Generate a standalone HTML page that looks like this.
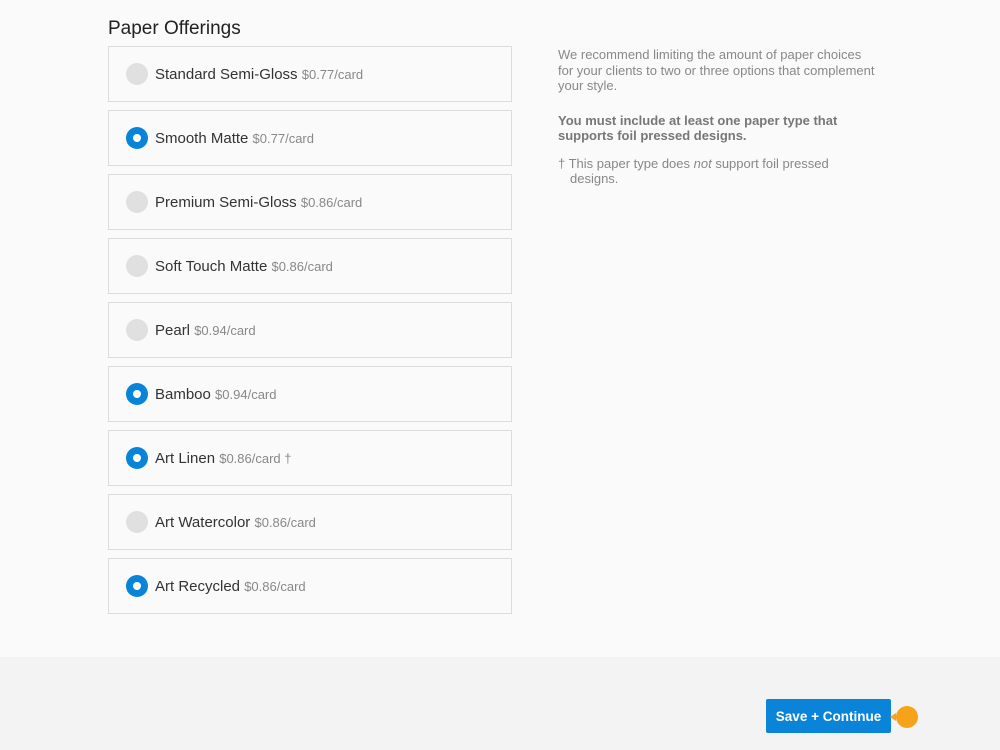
<!DOCTYPE html><html><head><style>
body{margin:0;width:1000px;height:750px;background:#fafafa;font-family:"Liberation Sans",sans-serif;position:relative;overflow:hidden}
h1{position:absolute;left:108px;top:18px;margin:0;font-size:19px;font-weight:normal;color:#222}
.c{position:absolute;left:108px;width:402px;height:54px;border:1px solid #dcdcdc;background:#fafafa;box-sizing:content-box}
.r{position:absolute;left:17px;top:16px;width:22px;height:22px;border-radius:50%;background:#e0e0e0}
.r.on{background:#0a84d8}
.r.on:after{content:"";position:absolute;left:7px;top:7px;width:8px;height:8px;border-radius:50%;background:#fff}
.t{position:absolute;left:46px;top:19px;font-size:15px;color:#333}
.t span{font-size:13px;color:#888}
.side{position:absolute;left:558px;top:47px;width:334px;font-size:13px;color:#888;line-height:15.5px}
.foot{position:absolute;left:0;top:657px;width:1000px;height:93px;background:#f3f3f3}
.btn{position:absolute;left:766px;top:699px;width:125px;height:34px;background:#0a84d8;color:#fff;font-weight:bold;font-size:13.5px;line-height:35px;text-align:center;border-radius:2px}
.dot{position:absolute;left:896px;top:706px;width:22px;height:22px;border-radius:50%;background:#f7a21b}
.dot:before{content:"";position:absolute;left:-6px;top:7px;border:4px solid transparent;border-right:6px solid #f7a21b;border-left:0}
</style></head><body>
<h1>Paper Offerings</h1>
<div class="c" style="top:46px"><div class="r"></div><div class="t">Standard Semi-Gloss <span>$0.77/card</span></div></div>
<div class="c" style="top:110px"><div class="r on"></div><div class="t">Smooth Matte <span>$0.77/card</span></div></div>
<div class="c" style="top:174px"><div class="r"></div><div class="t">Premium Semi-Gloss <span>$0.86/card</span></div></div>
<div class="c" style="top:238px"><div class="r"></div><div class="t">Soft Touch Matte <span>$0.86/card</span></div></div>
<div class="c" style="top:302px"><div class="r"></div><div class="t">Pearl <span>$0.94/card</span></div></div>
<div class="c" style="top:366px"><div class="r on"></div><div class="t">Bamboo <span>$0.94/card</span></div></div>
<div class="c" style="top:430px"><div class="r on"></div><div class="t">Art Linen <span>$0.86/card †</span></div></div>
<div class="c" style="top:494px"><div class="r"></div><div class="t">Art Watercolor <span>$0.86/card</span></div></div>
<div class="c" style="top:558px"><div class="r on"></div><div class="t">Art Recycled <span>$0.86/card</span></div></div>
<div class="side">We recommend limiting the amount of paper choices<br>for your clients to two or three options that complement your style.
<div style="margin-top:19px;font-weight:bold;color:#777">You must include at least one paper type that<br>supports foil pressed designs.</div>
<div style="margin-top:12px;padding-left:12px;text-indent:-12px">† This paper type does <i>not</i> support foil pressed<br>designs.</div></div>
<div class="foot"></div>
<div class="btn">Save + Continue</div><div class="dot"></div>
</body></html>
